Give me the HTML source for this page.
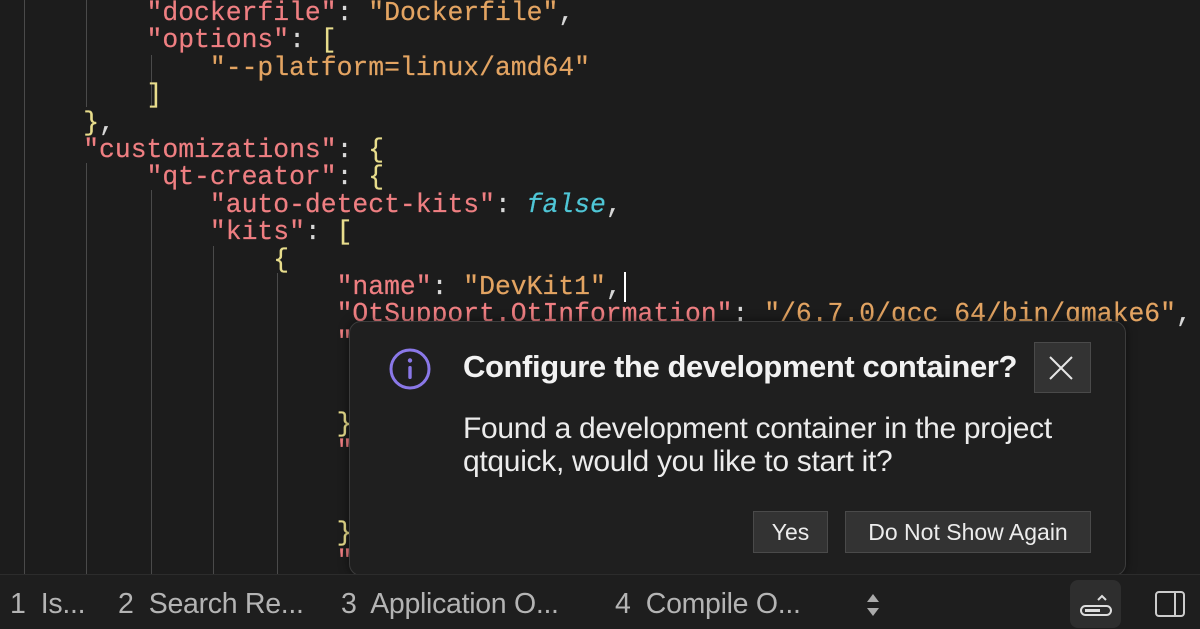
<!DOCTYPE html>
<html><head><meta charset="utf-8"><style>
html,body{margin:0;padding:0}
body{width:1200px;height:628px;overflow:hidden;background:#1c1c1c;position:relative;font-family:"Liberation Sans",sans-serif}
.code{position:absolute;left:4px;top:0;font-family:"Liberation Mono",monospace;font-size:26.4px;color:#d8d8d8;-webkit-text-stroke:0.2px}
.code div{height:27.4px;line-height:27.4px;white-space:pre}
.k{color:#ef7f82}.s{color:#e3a462}.b{color:#e8dd8c}.f{color:#4fc6d6;font-style:italic}
.g{position:absolute;width:1px;background:#4a4a4a}
.dlg{position:absolute;left:349px;top:321px;width:775px;height:253px;background:#1f1f1f;border:1px solid #3c3c3c;border-radius:12px;box-shadow:0 0 10px rgba(0,0,0,.5)}
.bar{position:absolute;left:0;top:574px;width:1200px;height:54px;background:#1e1e1e;border-top:1px solid #2c2c2c}
.tab{position:absolute;top:588px;font-size:28.5px;color:#b4b4b4;letter-spacing:-0.3px}
.btn{position:absolute;top:511px;height:40px;background:#333;border:1px solid #4a4a4a;color:#ececec;font-size:23px;line-height:40px;text-align:center}
</style></head><body>
<div class="g" style="left:24px;top:0;height:574px"></div>
<div class="g" style="left:86px;top:0;height:107px"></div>
<div class="g" style="left:86px;top:163px;height:411px"></div>
<div class="g" style="left:151px;top:55px;height:52px"></div>
<div class="g" style="left:151px;top:190px;height:384px"></div>
<div class="g" style="left:213px;top:246px;height:328px"></div>
<div class="g" style="left:277px;top:273px;height:301px"></div>
<div class="code"><div>         <span class="k">"dockerfile"</span>: <span class="s">"Dockerfile"</span>,</div><div>         <span class="k">"options"</span>: <span class="b">[</span></div><div>             <span class="s">"--platform=linux/amd64"</span></div><div>         <span class="b">]</span></div><div>     <span class="b">}</span>,</div><div>     <span class="k">"customizations"</span>: <span class="b">{</span></div><div>         <span class="k">"qt-creator"</span>: <span class="b">{</span></div><div>             <span class="k">"auto-detect-kits"</span>: <span class="f">false</span>,</div><div>             <span class="k">"kits"</span>: <span class="b">[</span></div><div>                 <span class="b">{</span></div><div>                     <span class="k">"name"</span>: <span class="s">"DevKit1"</span>,<span style="border-left:2px solid #fff;margin-left:2px"></span></div><div>                     <span class="k">"QtSupport.QtInformation"</span>: <span class="s">"/6.7.0/gcc_64/bin/qmake6"</span>,</div><div>                     <span class="k">"</span></div><div></div><div></div><div>                     <span class="b">}</span></div><div>                     <span class="k">"</span></div><div></div><div></div><div>                     <span class="b">}</span></div><div>                     <span class="k">"</span></div></div>
<div class="dlg"></div>
<svg style="position:absolute;left:388px;top:347px" width="44" height="44" viewBox="0 0 44 44"><circle cx="22" cy="22" r="19" fill="none" stroke="#8a78e8" stroke-width="3"/><rect x="20.3" y="19" width="3.4" height="13" rx="1.5" fill="#8a78e8"/><circle cx="22" cy="13.5" r="2.2" fill="#8a78e8"/></svg>
<div style="position:absolute;left:463px;top:349px;font-size:31px;font-weight:bold;color:#f2f2f2;letter-spacing:-0.4px">Configure the development container?</div>
<div style="position:absolute;left:1034px;top:342px;width:55px;height:49px;background:#333;border:1px solid #4a4a4a"></div>
<svg style="position:absolute;left:1048px;top:355px" width="26" height="26" viewBox="0 0 26 26"><path d="M2 2L24 24M24 2L2 24" stroke="#e6e6e6" stroke-width="2"/></svg>
<div style="position:absolute;left:463px;top:412px;font-size:30px;line-height:33px;color:#ececec;letter-spacing:-0.3px">Found a development container in the project<br>qtquick, would you like to start it?</div>
<div class="btn" style="left:753px;width:73px">Yes</div>
<div class="btn" style="left:845px;width:244px">Do Not Show Again</div>
<div class="bar"></div>
<div class="tab" style="left:10px">1&nbsp; Is...</div>
<div class="tab" style="left:118px">2&nbsp; Search Re...</div>
<div class="tab" style="left:341px">3&nbsp; Application O...</div>
<div class="tab" style="left:615px">4&nbsp; Compile O...</div>
<svg style="position:absolute;left:864px;top:592px" width="18" height="26" viewBox="0 0 18 26"><path d="M9 2L15 10H3Z M9 24L15 16H3Z" fill="#aaa"/></svg>
<div style="position:absolute;left:1070px;top:580px;width:51px;height:48px;background:#2e2e2e;border-radius:8px"></div>
<svg style="position:absolute;left:1076px;top:592px" width="40" height="30" viewBox="0 0 40 30"><path d="M22 8L26 4L30 8" fill="none" stroke="#ddd" stroke-width="2"/><rect x="5" y="14" width="30" height="9" rx="4.5" fill="none" stroke="#ddd" stroke-width="2"/><rect x="9" y="17" width="15" height="3" fill="#ddd"/></svg>
<svg style="position:absolute;left:1154px;top:590px" width="32" height="28" viewBox="0 0 32 28"><rect x="2" y="2" width="28" height="24" rx="3" fill="none" stroke="#ccc" stroke-width="2"/><path d="M21 2V26" stroke="#ccc" stroke-width="2"/></svg>
</body></html>
